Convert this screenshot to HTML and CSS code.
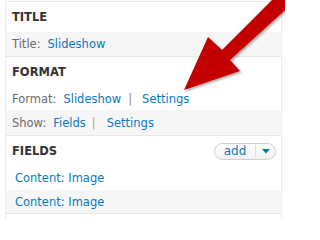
FILE: index.html
```html
<!DOCTYPE html>
<html>
<head>
<meta charset="utf-8">
<link rel="stylesheet" href="styles.css">
</head>
<body>
<div class="panel">
  <section class="sec">
    <div class="head">TITLE</div>
    <div class="row grey"><span class="lbl">Title:</span><a class="lnk">Slideshow</a></div>
  </section>
  <section class="sec">
    <div class="head">FORMAT</div>
    <div class="row row-format"><span class="lbl">Format:</span><a class="lnk">Slideshow</a><span class="sep">|</span><a class="lnk">Settings</a></div>
    <div class="row row-show grey"><span class="lbl">Show:</span><a class="lnk">Fields</a><span class="sep orange">|</span><a class="lnk">Settings</a></div>
  </section>
  <section class="sec">
    <div class="head head-fields">FIELDS
      <div class="btn"><span class="btn-main">add</span><span class="btn-drop"><svg width="8" height="5" viewBox="0 0 8 5"><path d="M0 0H8L4 4.5Z" fill="#0074bd"/></svg></span></div>
    </div>
    <div class="row field"><a class="lnk">Content: Image</a></div>
    <div class="row field field-last grey"><a class="lnk">Content: Image</a></div>
  </section>
</div>
<svg class="arrow" width="285" height="219" viewBox="0 0 285 219">
  <defs>
    <filter id="sh" x="-20%" y="-20%" width="140%" height="140%">
      <feDropShadow dx="1.5" dy="1.5" stdDeviation="1" flood-color="#000" flood-opacity="0.35"/>
    </filter>
  </defs>
  <polygon filter="url(#sh)" fill="#c20000" points="184,90 208,37 222,50 278,-6 292,4 230,60 240,71"/>
</svg>
</body>
</html>
```
FILE: styles.css
```css
html, body { margin: 0; padding: 0; background: #fff; }
body {
  width: 285px; height: 219px; overflow: hidden; position: relative;
  font-family: "DejaVu Sans", "Liberation Sans", sans-serif;
}
.panel {
  margin: 1px 0 0 5px;
  width: 275px;
  border: 1px solid #ececec;
  border-bottom: none;
  height: 240px;
}
.sec { border-bottom: 1px solid #e6e6e6; }
.head {
  height: 30px;
  padding-left: 6px;
  font-size: 11.5px; font-weight: bold; color: #333;
  display: flex; align-items: center; justify-content: space-between;
}
.head-fields { padding-right: 5px; }
.row {
  height: 24px; display: flex; align-items: center;
  padding-left: 6px; font-size: 11.5px;
}
.row-format { height: 23px; }
.row-show { height: 25px; }
.grey { background: #f6f6f6; }
.lbl { color: #6b6b6b; margin-right: 7px; }
.lnk { color: #0a78c0; }
.sep { color: #8a8a8a; margin: 0 10px 0 7px; }
.sep.orange { color: #d39a5a; margin: 0 11px 0 6px; }
.field { padding-left: 9px; }
.field-last { height: 23px; }
.btn {
  display: flex; align-items: center;
  height: 15px; width: 60px;
  border: 1px solid #cfcfcf; border-radius: 9px;
  background: linear-gradient(#ffffff, #f1f1f1);
  font-weight: normal; font-size: 12px; line-height: 15px;
}
.btn-main { width: 40px; text-align: center; color: #0a78c0; border-right: 1px solid #dcdcdc; height: 13px; line-height: 13px; }
.btn-drop { flex: 1; display: flex; justify-content: center; align-items: center; }
.arrow { position: absolute; left: 0; top: 0; }
```
